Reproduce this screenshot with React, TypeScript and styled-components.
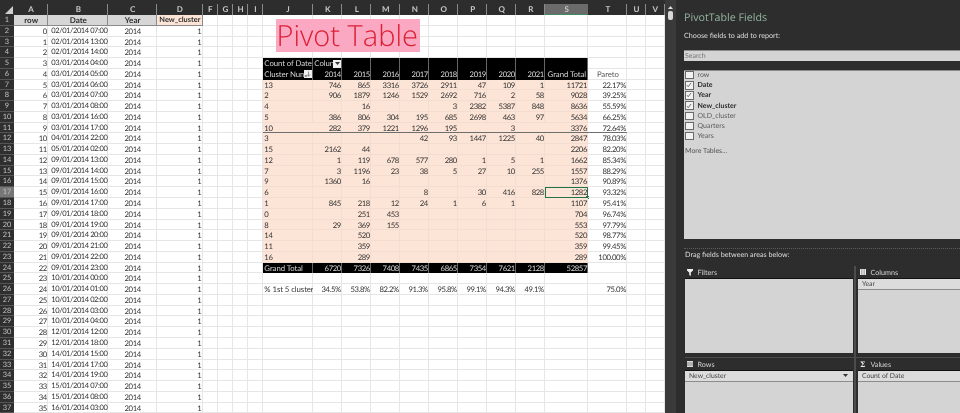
import React from "react";
import styled, { createGlobalStyle } from "styled-components";

const Global = createGlobalStyle`
  html, body { margin: 0; padding: 0; background: #fff; }
  body { font-family: "Lato", "Liberation Sans", sans-serif; text-rendering: geometricPrecision; }
`;

const COLS = "14px 34.3px 60px 48.7px 45.8px 15.2px 15px 15px 15px 50px 29.3px 29px 29px 29px 29px 29px 29px 29px 43.1px 39px 18.3px 19.3px";
const ROW_H = 10.77;
const PANEL_FONT = `"Lato", "Liberation Sans", sans-serif`;

const Page = styled.div`
  display: flex;
  width: 960px;
  height: 413px;
  overflow: hidden;
  filter: blur(0.3px);
`;
const Sheet = styled.div`
  position: relative;
  width: 665px;
  flex: none;
  overflow: hidden;
  background: #fff;
  padding-top: 4px;
  box-sizing: border-box;
  background-image: linear-gradient(#2d2d2d 4px, transparent 4px);
`;
const Row = styled.div<{ $h?: number }>`
  display: grid;
  grid-template-columns: ${COLS};
  height: ${(p) => p.$h ?? ROW_H}px;
`;
const ColHead = styled.div<{ $sel?: boolean }>`
  background: ${(p) => (p.$sel ? "#6b6b6b" : "#2d2d2d")};
  color: #c8c8c8;
  font-size: 8px;
  font-weight: 700;
  text-align: center;
  line-height: 10px;
  box-shadow: inset -1px 0 0 ${(p) => (p.$sel ? "#6b6b6b" : "#8a8a8a")};
  border-bottom: ${(p) => (p.$sel ? "1px solid #3f8a5f" : "0")};
  box-sizing: border-box;
`;
const Corner = styled.div`
  background: #2d2d2d;
  display: flex;
  justify-content: flex-end;
  align-items: flex-end;
  padding: 0 1px 1px 0;
  box-sizing: border-box;
`;
const RowHead = styled.div<{ $sel?: boolean }>`
  background: ${(p) => (p.$sel ? "#777" : "#2f2f2f")};
  color: #c4c4c4;
  font-size: 7.4px;
  text-align: center;
  line-height: ${ROW_H}px;
  box-shadow: inset 0 -1px 0 #555;
`;
const Cell = styled.div<{
  $align?: string;
  $fill?: string;
  $color?: string;
  $text?: boolean;
  $thick?: boolean;
}>`
  position: relative;
  box-sizing: border-box;
  height: ${ROW_H}px;
  padding: 0 1.4px;
  font-size: ${(p) => (p.$text ? "7.8px" : "7.7px")};
  letter-spacing: ${(p) => (p.$text ? "-0.08px" : "-0.38px")};
  line-height: ${ROW_H}px;
  white-space: nowrap;
  overflow: hidden;
  color: ${(p) => p.$color ?? "#333"};
  text-align: ${(p) => p.$align ?? "left"};
  background: ${(p) => p.$fill ?? "transparent"};
  box-shadow: ${(p) =>
    p.$thick ? "inset 0 -1px 0 #6e6e6e" : `inset -1px -1px 0 ${p.$fill ? "#f3ddd0" : "#e6e6e6"}`};
`;
const DateCell = styled(Cell)`
  font-size: 7.5px;
  letter-spacing: -0.42px;
  padding-left: 3px;
`;
const HeadCell = styled(Cell)`
  background: #d6d6d6;
  font-weight: 700;
  text-align: center;
  letter-spacing: 0;
  font-size: 8px;
  color: #2e2e2e;
  box-shadow: inset -1px 0 0 #8a8a8a, inset 0 -1px 0 #8a8a8a;
`;
const PeachHead = styled(HeadCell)`
  background: #fce4d6;
  font-size: 7.4px;
  padding: 0;
`;
const BlackCell = styled(Cell)`
  background: #000;
  color: #d8d8d8;
  box-shadow: inset -1px 0 0 #666;
`;
const Selected = styled(Cell)`
  overflow: visible;
  box-shadow: inset 0 0 0 1px #217346;
  &::after {
    content: "";
    position: absolute;
    right: -1px;
    bottom: -1px;
    width: 3px;
    height: 3px;
    background: #217346;
  }
`;
const FilterBtn = styled.span`
  position: absolute;
  top: 1.5px;
  right: 1px;
  width: 8px;
  height: 8px;
  background: #f0f0f0;
  display: flex;
  align-items: center;
  justify-content: center;
`;
const TitleBox = styled.div`
  position: absolute;
  left: 275.5px;
  top: 19px;
  width: 144.5px;
  height: 33px;
  padding-left: 1px;
  box-sizing: border-box;
  background: #fba8c2;
  color: #dd2036;
  font-family: "Open Sans", "Liberation Sans", sans-serif;
  font-weight: 300;
  font-size: 29px;
  line-height: 33px;
  white-space: nowrap;
`;
const ScrollTrack = styled.div`
  width: 10.5px;
  flex: none;
  background: #3a3a3a;
  display: flex;
  flex-direction: column;
  align-items: center;
  padding-top: 6px;
  gap: 2px;
  box-sizing: border-box;
`;
const ScrollThumb = styled.div`
  width: 5px;
  height: 9px;
  border-radius: 2px;
  background: #d8d8d8;
`;
const Panel = styled.div`
  flex: 1;
  min-width: 0;
  background: #2d2d2d;
  padding: 0 0 0 8.5px;
  display: flex;
  flex-direction: column;
  color: #ddd;
  overflow: hidden;
`;
const PanelTitle = styled.div`
  font-family: "Open Sans", sans-serif;
  font-size: 10.7px;
  color: #93b49f;
  margin-top: 10px;
  line-height: 16px;
`;
const Hint = styled.div<{ $left?: number; $top?: number }>`
  font-family: ${PANEL_FONT};
  font-size: 7.2px;
  color: #dcdcdc;
  line-height: 10px;
  margin-left: ${(p) => p.$left ?? 0}px;
  margin-top: ${(p) => p.$top ?? 0}px;
`;
const SearchBox = styled.div`
  margin-top: 9px;
  height: 11px;
  background: #d4d4d4;
  border-top: 1px solid #8a8a8a;
  box-sizing: border-box;
  font-family: ${PANEL_FONT};
  font-size: 7px;
  line-height: 10px;
  color: #777;
  padding-left: 1px;
`;
const FieldList = styled.div`
  margin-top: 9px;
  height: 169px;
  flex: none;
  background: #d4d4d4;
  box-sizing: border-box;
  padding: 0 0 0 1px;
  border-top: 1px solid #8a8a8a;
  display: flex;
  flex-direction: column;
`;
const FieldRow = styled.div<{ $on?: boolean }>`
  display: flex;
  align-items: center;
  gap: 4px;
  height: 10.2px;
  flex: none;
  font-family: ${PANEL_FONT};
  font-size: 7px;
  font-weight: ${(p) => (p.$on ? 700 : 400)};
  color: ${(p) => (p.$on ? "#2a2a2a" : "#5c5c5c")};
  &:first-child { margin-top: -1px; }
`;
const Check = styled.span`
  width: 6.5px;
  height: 6.5px;
  background: #f2f2f2;
  border: 0.5px solid #6a6a6a;
  flex: none;
  display: flex;
  align-items: center;
  justify-content: center;
`;
const MoreLink = styled.div`
  margin-top: 4.5px;
  font-family: ${PANEL_FONT};
  font-size: 7px;
  color: #555;
  line-height: 10px;
`;
const Dotted = styled.div`
  margin-top: 9px;
  border-top: 1px dotted #5c5c5c;
  height: 1px;
`;
const Areas = styled.div`
  margin-top: 6px;
  margin-left: 1px;
  display: grid;
  grid-template-columns: 169px 1fr;
  grid-template-rows: 92px 1fr;
  flex: 1;
  min-height: 0;
`;
const Area = styled.div<{ $right?: boolean; $top?: boolean }>`
  display: flex;
  flex-direction: column;
  min-width: 0;
  box-sizing: border-box;
  padding-right: ${(p) => (p.$right ? 0 : 1.5)}px;
  padding-left: ${(p) => (p.$right ? 2 : 0)}px;
  border-left: ${(p) => (p.$right ? "2px solid #4c4c4c" : "0")};
  border-bottom: ${(p) => (p.$top ? "1px solid #4c4c4c" : "0")};
`;
const AreaHead = styled.div`
  height: 12px;
  flex: none;
  display: flex;
  align-items: center;
  gap: 4.5px;
  padding-left: 2px;
  font-family: ${PANEL_FONT};
  font-size: 7.2px;
  color: #d4d4d4;
`;
const Sigma = styled.span`
  font-family: "DejaVu Serif", serif;
  font-weight: 700;
  font-size: 7.5px;
  width: 6px;
  color: #eee;
`;
const AreaBox = styled.div<{ $short?: boolean }>`
  height: ${(p) => (p.$short ? "auto" : "74.5px")};
  flex: ${(p) => (p.$short ? 1 : "none")};
  background: #d4d4d4;
  border-top: 1px solid #111;
  box-sizing: border-box;
`;
const Chip = styled.div`
  height: 9.5px;
  padding: 0 5px 0 4px;
  display: flex;
  align-items: center;
  justify-content: space-between;
  background: #dcdcdc;
  border-bottom: 1px solid #8c8c8c;
  font-family: ${PANEL_FONT};
  font-size: 6.8px;
  color: #444;
`;

const Funnel = () => (
  <svg width="6" height="7" viewBox="0 0 6 7"><path d="M0 0h6v1.4L3.8 3.6V7L2.2 6V3.6L0 1.4z" fill="#eee" /></svg>
);
const ColsIcon = () => (
  <svg width="6" height="6" viewBox="0 0 6 6"><path d="M0 0h1.7v6H0zM2.15 0h1.7v6h-1.7zM4.3 0H6v6H4.3z" fill="#eee" /></svg>
);
const RowsIcon = () => (
  <svg width="6" height="6" viewBox="0 0 6 6"><path d="M0 0h6v1.7H0zM0 2.15h6v1.7H0zM0 4.3h6V6H0z" fill="#ddd" /></svg>
);
const Tick = () => (
  <svg width="6" height="6" viewBox="0 0 6 6"><path d="M1 3.2l1.2 1.5L5 1" stroke="#333" strokeWidth=".7" fill="none" /></svg>
);
const Arrow = () => (
  <svg width="5" height="3" viewBox="0 0 5 3"><path d="M0 0h5L2.5 3z" fill="#333" /></svg>
);
const UpArrow = () => (
  <svg width="5" height="3" viewBox="0 0 5 3"><path d="M0 3h5L2.5 0z" fill="#ddd" /></svg>
);
const SortIcon = () => (
  <svg width="7" height="6" viewBox="0 0 7 6"><path d="M4.5 0.5v4.5M3 3.5l1.5 1.8L6 3.5M1 4.5h1.5v1H1z" stroke="#555" strokeWidth=".6" fill="none" /></svg>
);

const HEADS = ["A", "B", "C", "D", "F", "G", "H", "I", "J", "K", "L", "M", "N", "O", "P", "Q", "R", "S", "T", "U", "V"];
const DATES = [
  "02/01/2014 07:00", "02/01/2014 13:00", "02/01/2014 14:00", "03/01/2014 04:00", "03/01/2014 05:00", "03/01/2014 06:00",
  "03/01/2014 07:00", "03/01/2014 08:00", "03/01/2014 16:00", "03/01/2014 17:00", "04/01/2014 22:00", "05/01/2014 02:00",
  "09/01/2014 13:00", "09/01/2014 14:00", "09/01/2014 15:00", "09/01/2014 16:00", "09/01/2014 17:00", "09/01/2014 18:00",
  "09/01/2014 19:00", "09/01/2014 20:00", "09/01/2014 21:00", "09/01/2014 22:00", "09/01/2014 23:00", "10/01/2014 00:00",
  "10/01/2014 01:00", "10/01/2014 02:00", "10/01/2014 03:00", "10/01/2014 04:00", "12/01/2014 12:00", "12/01/2014 18:00",
  "14/01/2014 15:00", "14/01/2014 17:00", "14/01/2014 19:00", "15/01/2014 07:00", "15/01/2014 08:00", "16/01/2014 03:00",
];
const PIVOT: string[][] = [
  ["13", "746", "865", "3316", "3726", "2911", "47", "109", "1", "11721", "22.17%"],
  ["2", "906", "1879", "1246", "1529", "2692", "716", "2", "58", "9028", "39.25%"],
  ["4", "", "16", "", "", "3", "2382", "5387", "848", "8636", "55.59%"],
  ["5", "386", "806", "304", "195", "685", "2698", "463", "97", "5634", "66.25%"],
  ["10", "282", "379", "1221", "1296", "195", "", "3", "", "3376", "72.64%"],
  ["3", "", "", "", "42", "93", "1447", "1225", "40", "2847", "78.03%"],
  ["15", "2162", "44", "", "", "", "", "", "", "2206", "82.20%"],
  ["12", "1", "119", "678", "577", "280", "1", "5", "1", "1662", "85.34%"],
  ["7", "3", "1196", "23", "38", "5", "27", "10", "255", "1557", "88.29%"],
  ["9", "1360", "16", "", "", "", "", "", "", "1376", "90.89%"],
  ["6", "", "", "", "8", "", "30", "416", "828", "1282", "93.32%"],
  ["1", "845", "218", "12", "24", "1", "6", "1", "", "1107", "95.41%"],
  ["0", "", "251", "453", "", "", "", "", "", "704", "96.74%"],
  ["8", "29", "369", "155", "", "", "", "", "", "553", "97.79%"],
  ["14", "", "520", "", "", "", "", "", "", "520", "98.77%"],
  ["11", "", "359", "", "", "", "", "", "", "359", "99.45%"],
  ["16", "", "289", "", "", "", "", "", "", "289", "100.00%"],
];
const YEARS = ["2014", "2015", "2016", "2017", "2018", "2019", "2020", "2021"];
const GRAND = ["Grand Total", "6720", "7326", "7408", "7435", "6865", "7354", "7621", "2128", "52857"];
const PCT = ["% 1st 5 cluster", "34.5%", "53.8%", "82.2%", "91.3%", "95.8%", "99.1%", "94.3%", "49.1%", "", "75.0%"];
const PEACH = "#fce4d6";

function pivotCells(r: number): React.ReactNode[] {
  const out: React.ReactNode[] = [];
  if (r === 5) {
    out.push(<BlackCell key="j" $text>Count of Date</BlackCell>);
    out.push(<BlackCell key="k" $text>Colun<FilterBtn><Arrow /></FilterBtn></BlackCell>);
    for (let i = 0; i < 8; i++) out.push(<BlackCell key={i} />);
    out.push(<Cell key="t" />);
  } else if (r === 6) {
    out.push(<BlackCell key="j" $text>Cluster Num<FilterBtn><SortIcon /></FilterBtn></BlackCell>);
    YEARS.forEach((y) => out.push(<BlackCell key={y} $align="right">{y}</BlackCell>));
    out.push(<BlackCell key="s" $align="center" $text>Grand Total</BlackCell>);
    out.push(<Cell key="t" $align="center" $color="#555" $text>Pareto</Cell>);
  } else if (r >= 7 && r <= 23) {
    const d = PIVOT[r - 7];
    const thick = r === 11;
    d.forEach((v, i) => {
      if (i === 9 && r === 17) out.push(<Selected key={i} $fill={PEACH} $align="right">{v}</Selected>);
      else if (i === 10) out.push(<Cell key={i} $align="right" $thick={thick}>{v}</Cell>);
      else out.push(<Cell key={i} $fill={PEACH} $thick={thick} $align={i === 0 ? "left" : "right"}>{v}</Cell>);
    });
  } else if (r === 24) {
    GRAND.forEach((v, i) => out.push(<BlackCell key={i} $text={i === 0} $align={i === 0 ? "left" : "right"}>{v}</BlackCell>));
    out.push(<Cell key="t" />);
  } else if (r === 26) {
    PCT.forEach((v, i) => out.push(<Cell key={i} $text={i === 0} $align={i === 0 ? "left" : "right"}>{v}</Cell>));
  } else {
    for (let i = 0; i < 11; i++) out.push(<Cell key={i} />);
  }
  return out;
}

const FIELDS: [string, boolean][] = [
  ["row", false], ["Date", true], ["Year", true], ["New_cluster", true], ["OLD_cluster", false], ["Quarters", false], ["Years", false],
];

export default function App() {
  const rows = Array.from({ length: 37 }, (_, k) => k + 1);
  return (
    <Page>
      <Global />
      <Sheet>
        <Row $h={11}>
          <Corner>
            <svg width="8" height="8" viewBox="0 0 8 8"><path d="M8 0v8H0z" fill="#cfcfcf" /></svg>
          </Corner>
          {HEADS.map((h) => <ColHead key={h} $sel={h === "S"}>{h}</ColHead>)}
        </Row>
        {rows.map((r) => (
          <Row key={r}>
            <RowHead $sel={r === 17}>{r}</RowHead>
            {r === 1 ? (
              <>
                <HeadCell>row</HeadCell>
                <HeadCell>Date</HeadCell>
                <HeadCell>Year</HeadCell>
                <PeachHead>New_cluster</PeachHead>
              </>
            ) : (
              <>
                <Cell $align="right">{r - 2}</Cell>
                <DateCell>{DATES[r - 2]}</DateCell>
                <Cell $align="center">2014</Cell>
                <Cell $align="right">1</Cell>
              </>
            )}
            <Cell /><Cell /><Cell /><Cell />
            {pivotCells(r)}
            <Cell /><Cell />
          </Row>
        ))}
        <TitleBox>Pivot Table</TitleBox>
      </Sheet>
      <ScrollTrack>
        <UpArrow />
        <ScrollThumb />
      </ScrollTrack>
      <Panel>
        <PanelTitle>PivotTable Fields</PanelTitle>
        <Hint $top={5}>Choose fields to add to report:</Hint>
        <SearchBox>Search</SearchBox>
        <FieldList>
          {FIELDS.map(([name, on]) => (
            <FieldRow key={name} $on={on}>
              <Check>{on && <Tick />}</Check>
              {name}
            </FieldRow>
          ))}
          <MoreLink>More Tables...</MoreLink>
        </FieldList>
        <Dotted />
        <Hint $left={1}>Drag fields between areas below:</Hint>
        <Areas>
          <Area $top>
            <AreaHead><Funnel />Filters</AreaHead>
            <AreaBox />
          </Area>
          <Area $top $right>
            <AreaHead><ColsIcon />Columns</AreaHead>
            <AreaBox><Chip>Year</Chip></AreaBox>
          </Area>
          <Area>
            <AreaHead><RowsIcon />Rows</AreaHead>
            <AreaBox $short><Chip>New_cluster<Arrow /></Chip></AreaBox>
          </Area>
          <Area $right>
            <AreaHead><Sigma>Σ</Sigma>Values</AreaHead>
            <AreaBox $short><Chip>Count of Date</Chip></AreaBox>
          </Area>
        </Areas>
      </Panel>
    </Page>
  );
}
